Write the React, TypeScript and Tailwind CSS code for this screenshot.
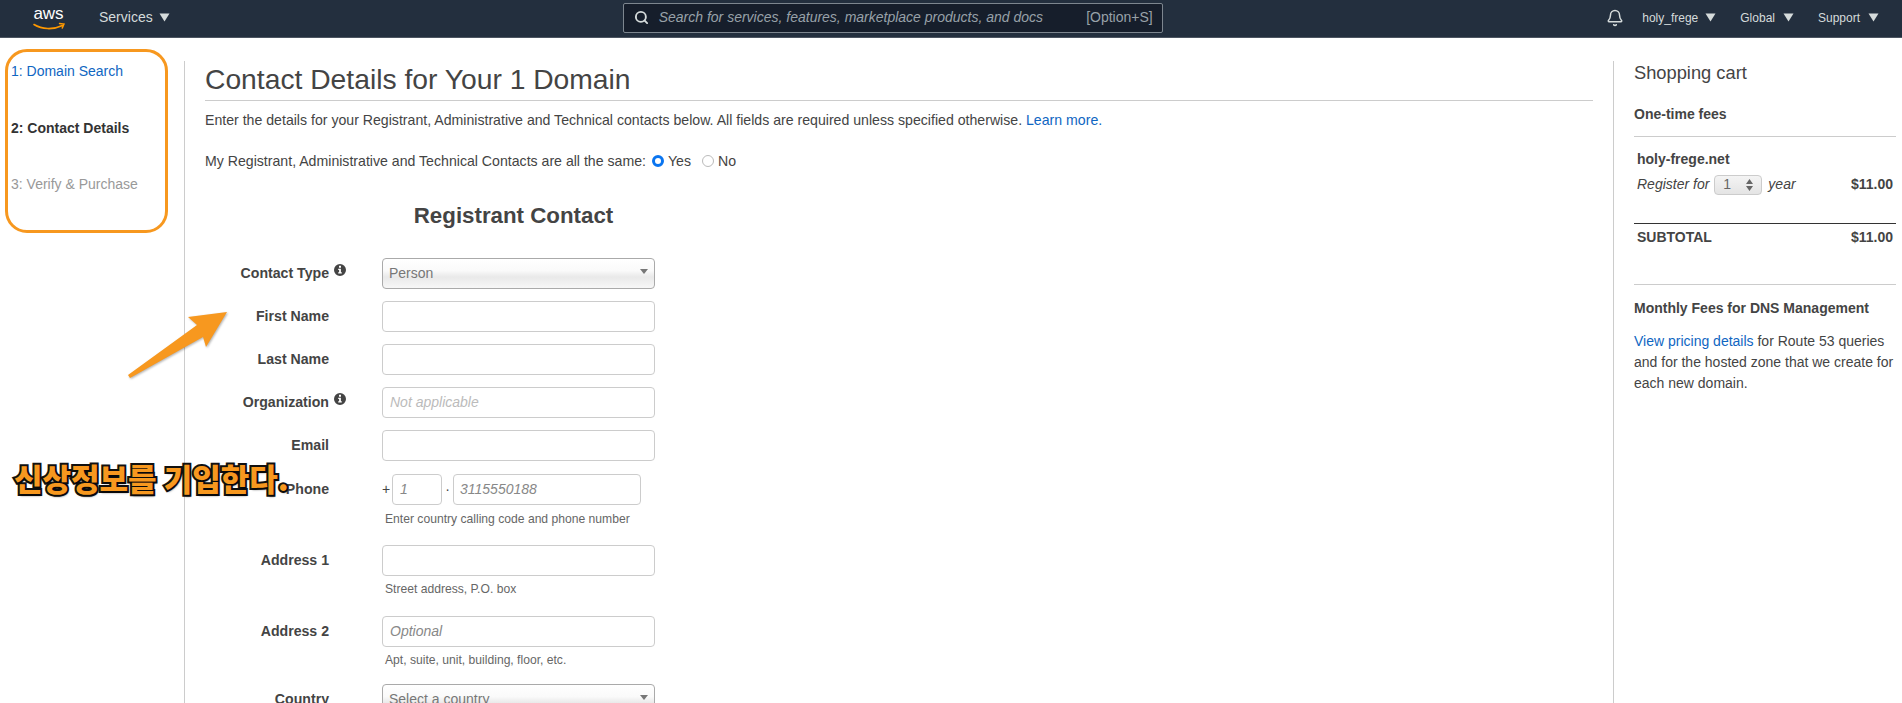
import React from 'react';
import { Search, Bell } from 'lucide-react';

const Caret = ({ className = '' }: { className?: string }) => (
  <svg width="11" height="9" viewBox="0 0 11 9" className={className}>
    <path d="M0.5 0.5h10L5.5 8.5z" fill="currentColor" />
  </svg>
);

const AwsLogo = () => (
  <svg width="36" height="28" viewBox="0 0 36 28">
    <path d="M3 20.5c8 5 19 5.5 28.5 1" fill="none" stroke="#f90" strokeWidth="1.6" strokeLinecap="round" />
    <path d="M28.5 19.5l4.5 .6-1.8 4" fill="none" stroke="#f90" strokeWidth="1.4" strokeLinecap="round" />
    <text x="17.5" y="15" textAnchor="middle" fill="#fff" fontSize="17" fontFamily="Liberation Sans, sans-serif">aws</text>
  </svg>
);

// font-awesome style info circle, the i is cut out of the disc
const InfoDot = () => (
  <svg width="12" height="12" viewBox="0 0 12 12" className="ml-[5px]">
    <path
      fillRule="evenodd"
      fill="#444"
      d="M6 0a6 6 0 1 1 0 12A6 6 0 0 1 6 0zM5 1.8v1.9h2V1.8zM4.2 4.8v1.1h.9v2.4h-.9v1.1h3.6V8.3h-.9V4.8z"
    />
  </svg>
);

const Row = ({ label, info, top, children }: { label: string; info?: boolean; top?: string; children: React.ReactNode }) => (
  <div className={`flex items-start ${top ?? ''}`}>
    <div className="flex h-[31px] w-[177px] shrink-0 items-center justify-end pr-[53px] pt-[1px] text-[14.13px] font-bold text-[#444]">
      <span className="relative">
        {label}
        {info && (
          <span className="absolute left-full top-[1px]">
            <InfoDot />
          </span>
        )}
      </span>
    </div>
    <div>{children}</div>
  </div>
);

const Field = ({ placeholder, light }: { placeholder?: string; light?: boolean }) => (
  <div className={`flex h-[31px] w-[273px] items-center rounded-[4px] border border-[#ccc] bg-white px-[7px] text-[14px] italic ${light ? 'text-[#bbb]' : 'text-[#888]'}`}>
    {placeholder}
  </div>
);

const SelectBox = ({ value }: { value: string }) => (
  <div className="flex h-[31px] w-[273px] items-center justify-between rounded-[4px] border border-[#aaa] bg-[linear-gradient(#ffffff_0%,#fafafa_40%,#e9e9e9_62%,#f7f7f7_100%)] pl-[6px] pr-[6px] text-[14px] text-[#777]">
    <span>{value}</span>
    <svg width="8" height="5" viewBox="0 0 8 5" className="-mt-[4px]"><path d="M0 0h8L4 5z" fill="#777" /></svg>
  </div>
);

const Help = ({ children, gap = 'mt-[5px]' }: { children: React.ReactNode; gap?: string }) => (
  <p className={`${gap} pl-[3px] text-[12.14px] leading-[16px] text-[#666]`}>{children}</p>
);

export default function App() {
  return (
    <div className="relative h-[703px] w-[1902px] overflow-hidden bg-white font-['Liberation_Sans',sans-serif] text-[#444]">
      {/* top nav */}
      <header className="flex h-[38px] items-center border-b border-[#4c5561] bg-[#232f3e] pb-[2px] text-[14px] text-[#d5dbdb]">
        <div className="ml-[31px] w-[36px]"><AwsLogo /></div>
        <div className="ml-[32px] flex items-center gap-[6px] text-[14px]">Services <Caret /></div>
        <div className="ml-[453px] flex h-[30px] w-[540px] items-center rounded-[2px] border border-[#7d868f] bg-[#161e2b] pl-[10px] pr-[9px]">
          <Search size={15} strokeWidth={3} className="text-[#d5dbdb]" />
          <span className="ml-[10px] flex-1 text-[14px] italic text-[#98a1a8]">Search for services, features, marketplace products, and docs</span>
          <span className="text-[14px] text-[#98a1a8]">[Option+S]</span>
        </div>
        <div className="ml-auto flex items-center pr-[23px] text-[12px]">
          <Bell size={18} strokeWidth={2} />
          <span className="ml-[18px]">holy_frege</span>
          <Caret className="ml-[7px]" />
          <span className="ml-[24px]">Global</span>
          <Caret className="ml-[8px]" />
          <span className="ml-[24px]">Support</span>
          <Caret className="ml-[8px]" />
        </div>
      </header>

      <div className="flex pt-[23px]">
        {/* wizard steps */}
        <nav className="h-[700px] w-[185px] shrink-0 border-r border-[#ccc] pl-[11px] text-[14px]">
          <div className="text-[#0f66c2]">1: Domain Search</div>
          <div className="mt-[36px] font-bold text-[#333]">2: Contact Details</div>
          <div className="mt-[35px] text-[#999]">3: Verify &amp; Purchase</div>
        </nav>

        {/* main form */}
        <main className="w-[1408px] shrink-0 pl-[20px]">
          <h1 className="border-b border-[#ccc] pb-[4px] pt-[1px] text-[28.25px] leading-[34px] text-[#444]">Contact Details for Your 1 Domain</h1>
          <p className="mt-[9px] text-[14.13px] leading-[20px]">
            Enter the details for your Registrant, Administrative and Technical contacts below. All fields are required unless specified otherwise. <span className="text-[#0f66c2]">Learn more.</span>
          </p>
          <div className="mt-[21px] flex items-center text-[14.13px] leading-[20px]">
            My Registrant, Administrative and Technical Contacts are all the same:
            <span className="ml-[6px] h-[12px] w-[12px] rounded-full border-[3.5px] border-[#0a75f0] bg-white" />
            <span className="ml-[4px]">Yes</span>
            <span className="ml-[11px] h-[12px] w-[12px] rounded-full border border-[#bbb] bg-white" />
            <span className="ml-[4px]">No</span>
          </div>
          <h2 className="mt-[31px] w-[617px] text-center text-[22.3px] font-bold leading-[28px]">Registrant Contact</h2>
          <div className="mt-[28px]">
            <Row label="Contact Type" info><SelectBox value="Person" /></Row>
            <Row label="First Name" top="mt-[12px]"><Field /></Row>
            <Row label="Last Name" top="mt-[12px]"><Field /></Row>
            <Row label="Organization" info top="mt-[12px]"><Field placeholder="Not applicable" light /></Row>
            <Row label="Email" top="mt-[12px]"><Field /></Row>
            <Row label="Phone" top="mt-[13px]">
              <div className="flex items-center text-[14px]">
                <span className="w-[10px] font-light">+</span>
                <div className="flex h-[31px] w-[50px] items-center rounded-[4px] border border-[#ccc] px-[7px] italic text-[#888]">1</div>
                <span className="w-[11px] text-center">·</span>
                <div className="flex h-[31px] w-[188px] items-center rounded-[4px] border border-[#ccc] px-[6px] italic text-[#888]">3115550188</div>
              </div>
              <Help gap="mt-[6px]">Enter country calling code and phone number</Help>
            </Row>
            <Row label="Address 1" top="mt-[18px]">
              <Field />
              <Help>Street address, P.O. box</Help>
            </Row>
            <Row label="Address 2" top="mt-[19px]">
              <Field placeholder="Optional" />
              <Help>Apt, suite, unit, building, floor, etc.</Help>
            </Row>
            <Row label="Country" top="mt-[16px]"><SelectBox value="Select a country" /></Row>
          </div>
        </main>

        {/* shopping cart */}
        <aside className="ml-[20px] h-[700px] w-[283px] shrink-0 border-l border-[#ccc] pl-[20px] pt-[1px] text-[14px]">
          <h3 className="text-[18.3px] leading-[22px]">Shopping cart</h3>
          <div className="mt-[20px] border-b border-[#ccc] pb-[11px] font-bold">One-time fees</div>
          <div className="mt-[12px] px-[3px] font-bold">holy-frege.net</div>
          <div className="mt-[4px] flex items-center px-[3px]">
            <span className="italic">Register for</span>
            <div className="ml-[5px] flex h-[20px] w-[48px] items-center justify-between rounded-[4px] border border-[#ccc] bg-gradient-to-b from-[#f4f4f4] to-[#e4e4e4] px-[8px] text-[#666]">
              1
              <svg width="7" height="12" viewBox="0 0 7 12"><path d="M0 5l3.5-5L7 5zM0 7h7l-3.5 5z" fill="#666" /></svg>
            </div>
            <span className="ml-[6px] italic">year</span>
            <span className="ml-auto font-bold">$11.00</span>
          </div>
          <div className="mt-[28px] flex justify-between border-t border-[#333] px-[3px] pt-[3px] font-bold">
            <span>SUBTOTAL</span>
            <span>$11.00</span>
          </div>
          <div className="mt-[36px] border-t border-[#ccc] pt-[13px] font-bold">Monthly Fees for DNS Management</div>
          <p className="mt-[12px] text-[14px] leading-[21px]">
            <span className="text-[#0f66c2]">View pricing details</span> for Route 53 queries and for the hosted zone that we create for each new domain.
          </p>
        </aside>
      </div>

      {/* annotations over the page */}
      <div className="absolute left-[5px] top-[49px] h-[184px] w-[163px] rounded-[22px] border-[3px] border-[#f7981f]" />
      <svg className="absolute left-[120px] top-[305px] drop-shadow-[1px_1px_1px_rgba(0,0,0,0.3)]" width="115" height="80" viewBox="120 305 115 80">
        <path d="M128 375L197 325 188 317 227 312 206 347 203 337 130 378z" fill="#f7981f" />
      </svg>
      <div className="absolute left-[14px] top-[456px] whitespace-nowrap font-['Noto_Sans_CJK_KR',sans-serif] text-[31px] font-black leading-[44px] text-[#f7981f] [paint-order:stroke] [-webkit-text-stroke:4px_#111] [text-shadow:1px_2px_2px_rgba(0,0,0,0.5)]">
        신상정보를 기입한다.
      </div>
    </div>
  );
}
